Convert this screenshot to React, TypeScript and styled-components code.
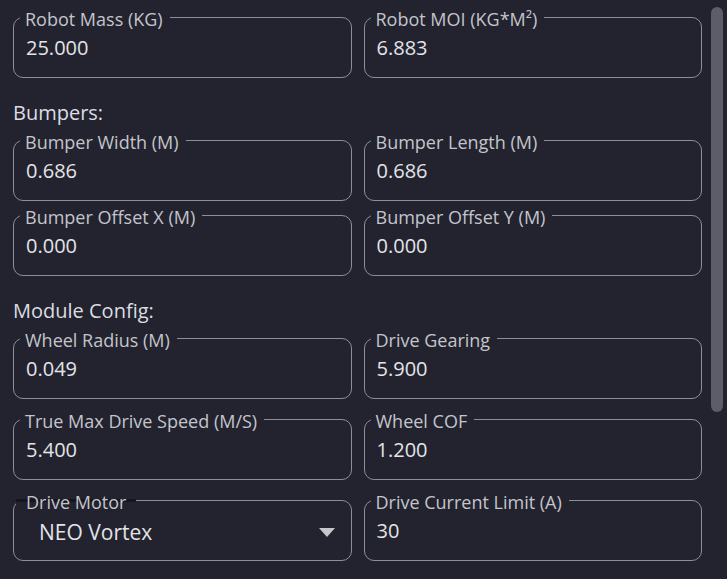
import React from "react";
import styled, { createGlobalStyle } from "styled-components";

const Global = createGlobalStyle`
  html, body {
    margin: 0;
    padding: 0;
    background: #22232e;
  }
  body {
    font-family: "Open Sans", "Noto Sans", sans-serif;
  }
`;

const Page = styled.div`
  display: flex;
  align-items: flex-start;
  width: 727px;
  height: 579px;
  overflow: hidden;
  background: #22232e;
`;

const Content = styled.div`
  flex: 1;
  min-width: 0;
  display: flex;
  flex-direction: column;
  padding: 5px 9px 0 13px;
`;

const ScrollTrack = styled.div`
  flex: none;
  width: 12px;
  height: 565px;
  margin: 7px 4px 0 0;
`;

const ScrollThumb = styled.div`
  width: 12px;
  border-radius: 6px;
  background: #5c5d68;
`;

const Grid = styled.div<{ $rowGap: number }>`
  display: grid;
  grid-template-columns: 1fr 1fr;
  column-gap: 12px;
  row-gap: ${(p) => p.$rowGap}px;
`;

const SectionTitle = styled.div`
  margin: 21px 0 2px;
  font-size: 20px;
  line-height: 27px;
  color: #dcdde3;
`;

const Field = styled.fieldset`
  margin: 0;
  min-width: 0;
  border: 1px solid #8d8e98;
  border-radius: 10px;
  padding: 5px 12px 15px;
`;

const Legend = styled.legend<{ $strip?: boolean }>`
  margin-left: ${(p) => (p.$strip ? -10 : -6)}px;
  padding: 4px ${(p) => (p.$strip ? 10 : 7)}px 0 ${(p) => (p.$strip ? 10 : 5)}px;
  font-size: 18px;
  line-height: 20px;
  color: #c4c5cc;
  white-space: nowrap;
  background: ${(p) =>
    p.$strip
      ? "linear-gradient(to bottom, transparent calc(50% - 1px), #15161c calc(50% - 1px), #15161c calc(50% + 2px), transparent calc(50% + 2px))"
      : "transparent"};
`;

const ValueInput = styled.input`
  display: block;
  width: 100%;
  box-sizing: border-box;
  border: 0;
  outline: 0;
  background: transparent;
  padding: 0;
  margin: 0;
  font-family: "Open Sans", "Noto Sans", sans-serif;
  font-size: 20px;
  line-height: 28px;
  height: 28px;
  color: #e4e4e9;
`;

const SelectBox = styled.div`
  display: flex;
  align-items: center;
  justify-content: space-between;
  height: 28px;
  padding: 1px 4px 0 13px;
  margin-bottom: -1px;
  font-size: 21px;
  line-height: 28px;
  color: #e4e4e9;
  cursor: pointer;
`;

const Arrow = styled.svg`
  width: 16px;
  height: 9px;
  flex: none;
`;

type FieldProps = { label: React.ReactNode; value: string };

function NumberField({ label, value }: FieldProps) {
  return (
    <Field>
      <Legend>{label}</Legend>
      <ValueInput defaultValue={value} />
    </Field>
  );
}

function SelectField({ label, value }: FieldProps) {
  return (
    <Field>
      <Legend $strip>{label}</Legend>
      <SelectBox>
        <span>{value}</span>
        <Arrow viewBox="0 0 16 9">
          <path d="M0 0 L16 0 L8 9 Z" fill="#c6c6ce" />
        </Arrow>
      </SelectBox>
    </Field>
  );
}

const thumbLength = 405;

export default function App() {
  return (
    <>
      <Global />
      <Page>
        <Content>
          <Grid $rowGap={0}>
            <NumberField label="Robot Mass (KG)" value="25.000" />
            <NumberField label="Robot MOI (KG*M²)" value="6.883" />
          </Grid>
          <SectionTitle>Bumpers:</SectionTitle>
          <Grid $rowGap={2}>
            <NumberField label="Bumper Width (M)" value="0.686" />
            <NumberField label="Bumper Length (M)" value="0.686" />
            <NumberField label="Bumper Offset X (M)" value="0.000" />
            <NumberField label="Bumper Offset Y (M)" value="0.000" />
          </Grid>
          <SectionTitle>Module Config:</SectionTitle>
          <Grid $rowGap={8}>
            <NumberField label="Wheel Radius (M)" value="0.049" />
            <NumberField label="Drive Gearing" value="5.900" />
            <NumberField label="True Max Drive Speed (M/S)" value="5.400" />
            <NumberField label="Wheel COF" value="1.200" />
            <SelectField label="Drive Motor" value="NEO Vortex" />
            <NumberField label="Drive Current Limit (A)" value="30" />
          </Grid>
        </Content>
        <ScrollTrack>
          <ScrollThumb style={{ height: thumbLength }} />
        </ScrollTrack>
      </Page>
    </>
  );
}
